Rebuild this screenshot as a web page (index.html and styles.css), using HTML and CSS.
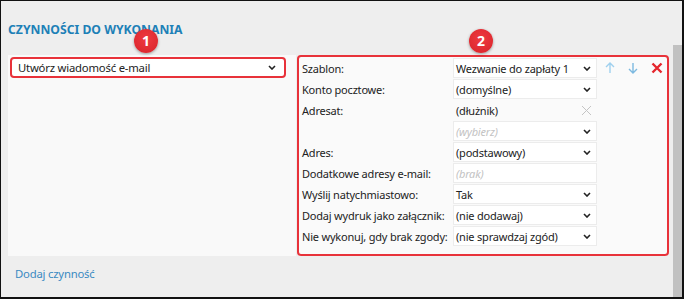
FILE: index.html
```html
<!DOCTYPE html>
<html lang="pl">
<head>
<meta charset="utf-8">
<title>Czynności do wykonania</title>
<link rel="stylesheet" href="styles.css">
</head>
<body>
<div class="frame">
  <div class="main">
    <h1 class="title">CZYNNOŚCI DO WYKONANIA</h1>
    <div class="panels">
      <div class="panel-left">
        <div class="select select-main">
          <span class="val">Utwórz wiadomość e-mail</span>
          <svg class="chev" width="8" height="5" viewBox="0 0 8 5"><path d="M1 1 L4 4 L7 1" fill="none" stroke="#222" stroke-width="1.6"/></svg>
        </div>
      </div>
      <div class="panel-right">
        <div class="form">
          <div class="lbl">Szablon:</div>
          <div class="select"><span class="val">Wezwanie do zapłaty 1</span><svg class="chev" width="8" height="5" viewBox="0 0 8 5"><path d="M1 1 L4 4 L7 1" fill="none" stroke="#222" stroke-width="1.6"/></svg></div>
          <div class="actions">
            <svg class="ico" width="10" height="12" viewBox="0 0 10 12"><path d="M5 11 V1.5 M1 5 L5 1 L9 5" fill="none" stroke="#9fd0ee" stroke-width="1.4"/></svg>
            <svg class="ico" width="10" height="12" viewBox="0 0 10 12"><path d="M5 1 V10.5 M1 7 L5 11 L9 7" fill="none" stroke="#7cb9e0" stroke-width="1.4"/></svg>
            <svg class="ico del" width="12" height="12" viewBox="0 0 12 12"><path d="M1.5 1.5 L10.5 10.5 M10.5 1.5 L1.5 10.5" fill="none" stroke="#e5262d" stroke-width="2.4"/></svg>
          </div>

          <div class="lbl">Konto pocztowe:</div>
          <div class="select"><span class="val">(domyślne)</span><svg class="chev" width="8" height="5" viewBox="0 0 8 5"><path d="M1 1 L4 4 L7 1" fill="none" stroke="#222" stroke-width="1.6"/></svg></div>

          <div class="lbl">Adresat:</div>
          <div class="tag"><span class="val">(dłużnik)</span><svg class="clear" width="11" height="11" viewBox="0 0 11 11"><path d="M1 1 L10 10 M10 1 L1 10" fill="none" stroke="#c4c4c4" stroke-width="1"/></svg></div>

          <div class="lbl"></div>
          <div class="select"><span class="ph">(wybierz)</span><svg class="chev" width="8" height="5" viewBox="0 0 8 5"><path d="M1 1 L4 4 L7 1" fill="none" stroke="#222" stroke-width="1.6"/></svg></div>

          <div class="lbl">Adres:</div>
          <div class="select"><span class="val">(podstawowy)</span><svg class="chev" width="8" height="5" viewBox="0 0 8 5"><path d="M1 1 L4 4 L7 1" fill="none" stroke="#222" stroke-width="1.6"/></svg></div>

          <div class="lbl">Dodatkowe adresy e-mail:</div>
          <div class="select"><span class="ph">(brak)</span></div>

          <div class="lbl">Wyślij natychmiastowo:</div>
          <div class="select"><span class="val">Tak</span><svg class="chev" width="8" height="5" viewBox="0 0 8 5"><path d="M1 1 L4 4 L7 1" fill="none" stroke="#222" stroke-width="1.6"/></svg></div>

          <div class="lbl">Dodaj wydruk jako załącznik:</div>
          <div class="select"><span class="val">(nie dodawaj)</span><svg class="chev" width="8" height="5" viewBox="0 0 8 5"><path d="M1 1 L4 4 L7 1" fill="none" stroke="#222" stroke-width="1.6"/></svg></div>

          <div class="lbl">Nie wykonuj, gdy brak zgody:</div>
          <div class="select"><span class="val">(nie sprawdzaj zgód)</span><svg class="chev" width="8" height="5" viewBox="0 0 8 5"><path d="M1 1 L4 4 L7 1" fill="none" stroke="#222" stroke-width="1.6"/></svg></div>
        </div>
      </div>
    </div>
    <a class="add" href="#">Dodaj czynność</a>
  </div>
  <div class="scrollbar"></div>
  <span class="badge b1">1</span>
  <span class="badge b2">2</span>
</div>
</body>
</html>
```
FILE: styles.css
```css
* { box-sizing: border-box; }
html, body { margin: 0; padding: 0; }
body {
  font-family: "Noto Sans", "Open Sans", sans-serif;
  font-size: 11px;
  letter-spacing: -0.2px;
  color: #222;
  background: #ededed;
}
.frame {
  position: relative;
  width: 684px;
  height: 299px;
  border: 1px solid #111;
  border-right-width: 2px;
  border-bottom-width: 2px;
  background: #eeeeee;
  display: flex;
  overflow: hidden;
}
.main {
  flex: 1;
  padding-left: 7px;
  display: flex;
  flex-direction: column;
}
.title {
  margin: 21px 0 0 0;
  height: 33px;
  font-size: 12.2px;
  line-height: 16px;
  font-weight: 700;
  color: #1d80b7;
  letter-spacing: 0;
}
.panels {
  display: flex;
  gap: 1px;
  height: 201px;
}
.panel-left {
  width: 288px;
  background: #f9f9f9;
  padding: 2px;
}
.select {
  background: #fff;
  border: 1px solid #ececec;
  height: 20px;
  display: flex;
  align-items: center;
  padding: 0 5px 0 2px;
}
.select .val, .select .ph, .tag .val { flex: 1; white-space: nowrap; }
.ph { color: #c2c2c2; font-style: italic; }
.chev { flex: none; }
.select-main {
  width: 276px;
  height: 21px;
  border: 2px solid #e8323a;
  border-radius: 4px;
  padding: 0 8px 0 6px;
  font-size: 11.3px;
}
.panel-right {
  width: 372px;
  background: #fafafa;
  border: 2px solid #e8323a;
  border-radius: 4px;
  padding: 1px 0 0 3px;
}
.form {
  display: grid;
  grid-template-columns: 151px 144px auto;
  grid-auto-rows: 20px;
  row-gap: 1px;
}
.lbl {
  grid-column: 1;
  display: flex;
  align-items: center;
  white-space: nowrap;
}
.form .select, .form .tag { grid-column: 2; }
.tag {
  display: flex;
  align-items: center;
  padding: 0 5px 0 3px;
}
.clear { flex: none; }
.actions {
  grid-column: 3;
  grid-row: 1;
  display: flex;
  align-items: center;
  padding-left: 8px;
  gap: 13px;
}
.add {
  margin: 10px 0 0 7px;
  color: #3b8ac2;
  text-decoration: none;
  font-size: 11.3px;
}
.scrollbar {
  width: 9px;
  margin: 44px 0 0 4px;
  background: #c1c1c1;
}
.badge {
  position: absolute;
  width: 24px;
  height: 24px;
  border-radius: 50%;
  background: radial-gradient(circle at 50% 40%, #ee3a40, #d8232a);
  box-shadow: 0 1px 3px rgba(0,0,0,0.35);
  color: #fff;
  font-weight: 700;
  font-size: 14px;
  line-height: 24px;
  text-align: center;
  top: 28px;
}
.b1 { left: 133px; }
.b2 { left: 468px; }
```
